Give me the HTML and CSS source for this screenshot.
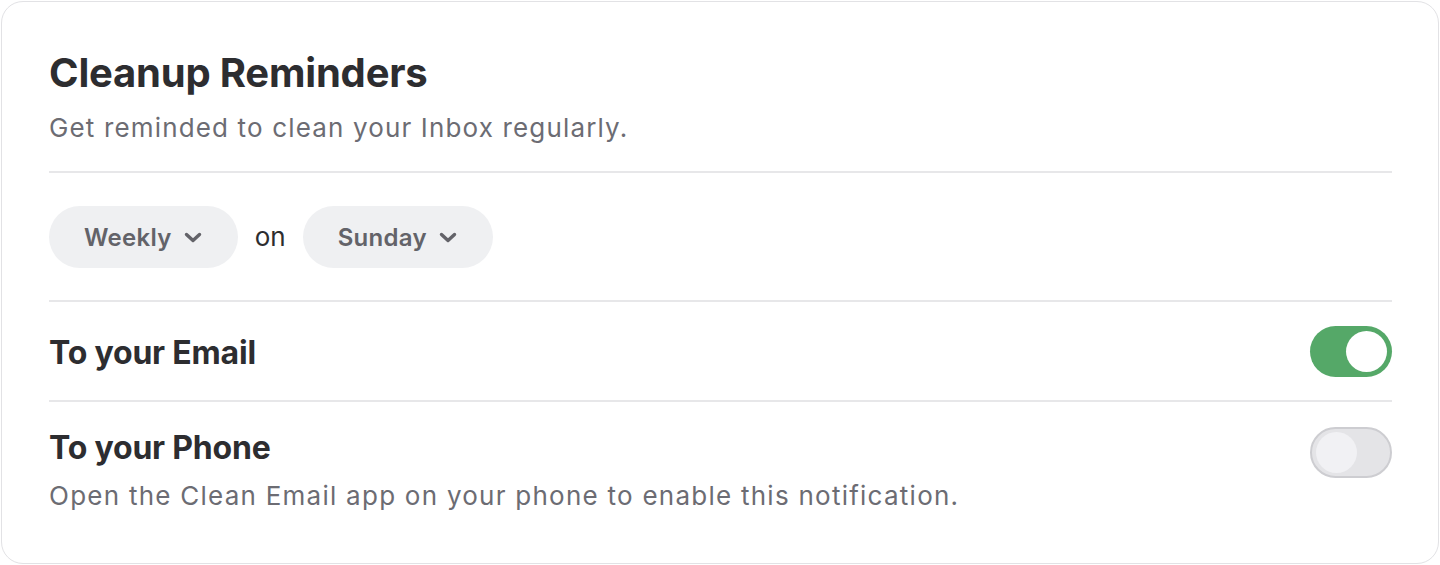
FILE: index.html
```html
<!DOCTYPE html>
<html lang="en">
<head>
<meta charset="utf-8">
<link rel="stylesheet" href="styles.css">
</head>
<body>
<div class="card">
  <h1 class="title">Cleanup Reminders</h1>
  <p class="subtitle">Get reminded to clean your Inbox regularly.</p>
  <div class="schedule">
    <button class="pill">Weekly <svg class="chev" viewBox="0 0 18 11" width="18" height="11"><path d="M2.5 2.5 L9 8.5 L15.5 2.5" fill="none" stroke="currentColor" stroke-width="3.4" stroke-linecap="round" stroke-linejoin="round"/></svg></button>
    <span class="on">on</span>
    <button class="pill">Sunday <svg class="chev" viewBox="0 0 18 11" width="18" height="11"><path d="M2.5 2.5 L9 8.5 L15.5 2.5" fill="none" stroke="currentColor" stroke-width="3.4" stroke-linecap="round" stroke-linejoin="round"/></svg></button>
  </div>
  <div class="row row-email">
    <div class="row-text">
      <div class="row-title">To your Email</div>
    </div>
    <span class="toggle toggle-on"><span class="knob"></span></span>
  </div>
  <div class="row row-phone">
    <div class="row-text">
      <div class="row-title">To your Phone</div>
      <div class="row-desc">Open the Clean Email app on your phone to enable this notification.</div>
    </div>
    <span class="toggle toggle-off"><span class="knob"></span></span>
  </div>
</div>
</body>
</html>
```

FILE: styles.css
```css
html, body {
  margin: 0;
  padding: 0;
  background: #ffffff;
}
body {
  font-family: Inter, "Noto Sans", "Liberation Sans", sans-serif;
  color: #2d2d30;
  padding: 1px;
}
.card {
  box-sizing: border-box;
  width: 1438px;
  height: 563px;
  border: 1.5px solid #e2e2e5;
  border-radius: 22px;
  padding: 47px 46px 0 47px;
  background: #fff;
}
.title {
  margin: 0;
  font-size: 40px;
  font-weight: 700;
  line-height: 48px;
  color: #2d2d30;
  letter-spacing: -0.2px;
}
.subtitle {
  margin: 14px 0 0;
  font-size: 26px;
  line-height: 34px;
  letter-spacing: 1.15px;
  color: #6c6c73;
  padding-bottom: 26px;
  border-bottom: 2px solid #e7e7e9;
}
.schedule {
  display: flex;
  align-items: center;
  gap: 17px;
  padding: 33px 0 32px;
  border-bottom: 2px solid #e7e7e9;
}
.pill {
  display: inline-flex;
  align-items: center;
  gap: 12px;
  height: 62px;
  padding: 0 36px 0 35px;
  border: none;
  border-radius: 31px;
  background: #eff0f2;
  font-family: inherit;
  font-size: 24px;
  font-weight: 600;
  letter-spacing: 0.3px;
  color: #636369;
}
.chev {
  margin-top: 1px;
}
.on {
  font-size: 26px;
  color: #2d2d30;
  padding-bottom: 2px;
}
.row {
  display: flex;
  align-items: center;
  justify-content: space-between;
}
.row-email {
  height: 98px;
  border-bottom: 2px solid #e7e7e9;
}
.row-email .row-title {
  margin-top: 3px;
}
.row-phone {
  padding-top: 25px;
  align-items: flex-start;
}
.row-phone .row-title {
  margin-top: 1px;
}
.row-title {
  font-size: 32px;
  font-weight: 700;
  color: #2d2d30;
  line-height: 40px;
  letter-spacing: -0.2px;
}
.row-desc {
  margin-top: 11px;
  font-size: 26px;
  line-height: 34px;
  letter-spacing: 1.25px;
  color: #6c6c73;
}
.toggle {
  box-sizing: border-box;
  position: relative;
  display: inline-block;
  width: 82px;
  height: 51px;
  border-radius: 26px;
  flex-shrink: 0;
}
.toggle-on {
  background: #55a868;
}
.toggle-off {
  background: #e4e4e7;
  border: 2px solid #cdcdd1;
}
.knob {
  position: absolute;
  top: 5px;
  width: 41px;
  height: 41px;
  border-radius: 50%;
}
.toggle-on .knob {
  right: 5px;
  background: #fff;
}
.toggle-off .knob {
  left: 4px;
  top: 3px;
  background: #f1f1f4;
}
```
